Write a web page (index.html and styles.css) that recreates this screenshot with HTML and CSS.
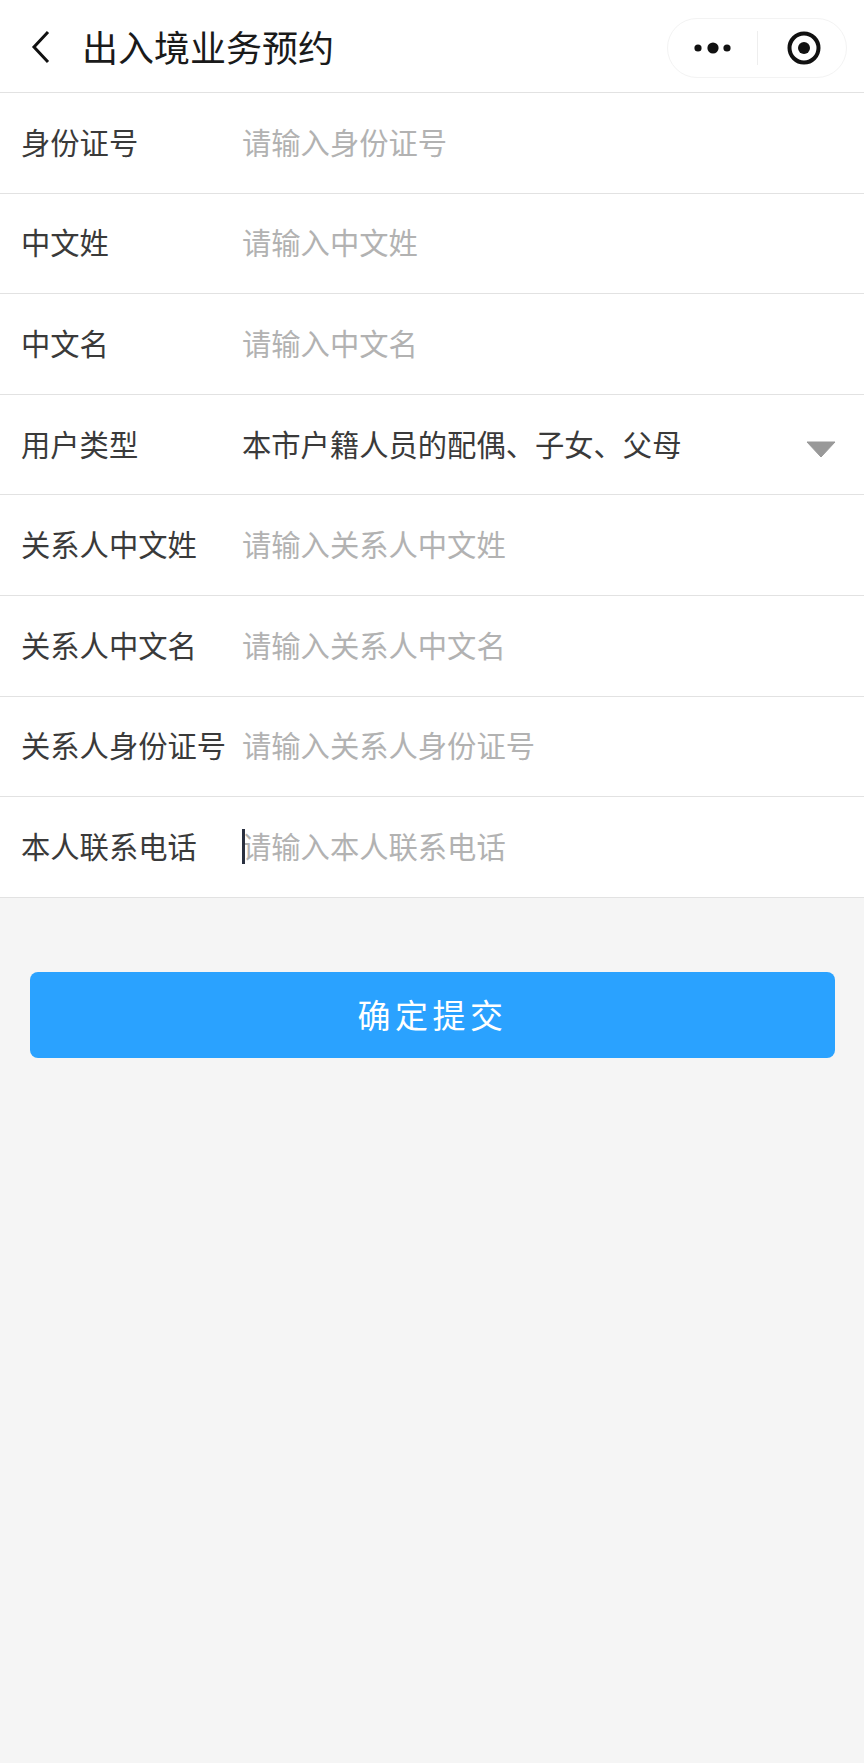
FILE: index.html
```html
<!DOCTYPE html>
<html lang="zh-CN">

<head>
  <meta charset="UTF-8">
  <meta name="viewport" content="width=device-width, initial-scale=1.0">
  <title>出入境业务预约</title>
  <link rel="stylesheet" href="styles.css">
</head>

<body>
  <div class="nav">
    <svg class="nav-back" width="30" height="40" viewBox="0 0 30 40">
      <path d="M23 5 L9 20 L23 35" fill="none" stroke="#111" stroke-width="3" />
    </svg>
    <div class="nav-title">出入境业务预约</div>
    <div class="capsule">
      <svg class="capsule-more" width="44" height="14" viewBox="0 0 44 14">
        <circle cx="5" cy="7" r="3.6" fill="#111" />
        <circle cx="20" cy="7" r="5.6" fill="#111" />
        <circle cx="34" cy="7" r="3.6" fill="#111" />
      </svg>
      <div class="capsule-line"></div>
      <svg class="capsule-close" width="36" height="36" viewBox="0 0 36 36">
        <circle cx="18" cy="18" r="14.5" fill="none" stroke="#111" stroke-width="4" />
        <circle cx="18" cy="18" r="6" fill="#111" />
      </svg>
    </div>
  </div>

  <div class="form">
    <div class="row">
      <div class="row-label">身份证号</div>
      <div class="row-value placeholder">请输入身份证号</div>
    </div>
    <div class="row">
      <div class="row-label">中文姓</div>
      <div class="row-value placeholder">请输入中文姓</div>
    </div>
    <div class="row">
      <div class="row-label">中文名</div>
      <div class="row-value placeholder">请输入中文名</div>
    </div>
    <div class="row">
      <div class="row-label">用户类型</div>
      <div class="row-value">本市户籍人员的配偶、子女、父母</div>
      <svg class="row-arrow" width="30" height="17" viewBox="0 0 30 17">
        <path d="M1 1 H29 L15 16 Z" fill="#999" stroke="#999" stroke-width="1" stroke-linejoin="round" />
      </svg>
    </div>
    <div class="row">
      <div class="row-label">关系人中文姓</div>
      <div class="row-value placeholder">请输入关系人中文姓</div>
    </div>
    <div class="row">
      <div class="row-label">关系人中文名</div>
      <div class="row-value placeholder">请输入关系人中文名</div>
    </div>
    <div class="row">
      <div class="row-label">关系人身份证号</div>
      <div class="row-value placeholder">请输入关系人身份证号</div>
    </div>
    <div class="row">
      <div class="row-label">本人联系电话</div>
      <div class="row-value placeholder"><span class="caret"></span>请输入本人联系电话</div>
    </div>
  </div>

  <div class="submit-wrap">
    <div class="submit-btn">确定提交</div>
  </div>
</body>

</html>
```

FILE: styles.css
```css
* {
  margin: 0;
  padding: 0;
  box-sizing: border-box;
}

body {
  width: 864px;
  min-height: 1763px;
  background-color: #f5f5f5;
  font-family: "Noto Sans CJK SC", "Liberation Sans", sans-serif;
  color: #3a3a3a;
}

.nav {
  display: flex;
  align-items: center;
  height: 93px;
  padding: 0 17.5px 0 25px;
  background-color: #fff;
  border-bottom: 1.5px solid #e2e2e2;
}

.nav-back {
  flex-shrink: 0;
  margin-top: 2px;
}

.nav-title {
  flex: 1;
  margin-left: 27px;
  font-size: 36px;
  line-height: 93px;
  color: #1a1a1a;
}

.capsule {
  display: flex;
  align-items: center;
  width: 179.5px;
  height: 60px;
  margin-top: 3px;
  padding-left: 24.5px;
  background-color: #fff;
  border: 1.5px solid #f3f3f3;
  border-radius: 30px;
}

.capsule-line {
  width: 1.5px;
  height: 34px;
  margin-left: 20px;
  background-color: #eee;
}

.capsule-close {
  margin-left: 28px;
}

.form {
  background-color: #fff;
}

.row {
  display: flex;
  align-items: center;
  height: 100.6px;
  padding-left: 21px;
  padding-bottom: 4px;
  border-bottom: 1.5px solid #e2e2e2;
  font-size: 29.3px;
  white-space: nowrap;
}

.row-label {
  width: 221px;
  flex-shrink: 0;
}

.row-value {
  flex: 1;
  position: relative;
}

.placeholder {
  color: #b2b2b2;
}

.caret {
  position: absolute;
  left: 0;
  top: 5.5px;
  width: 2.5px;
  height: 35px;
  background-color: #2a3040;
}

.row-arrow {
  margin-right: 28px;
  margin-top: 13px;
}

.submit-wrap {
  padding: 74px 29px 0 30px;
}

.submit-btn {
  height: 86px;
  line-height: 85px;
  text-align: center;
  font-size: 33px;
  letter-spacing: 4.5px;
  color: #fff;
  background-color: #2aa2ff;
  border-radius: 8px;
}
```
